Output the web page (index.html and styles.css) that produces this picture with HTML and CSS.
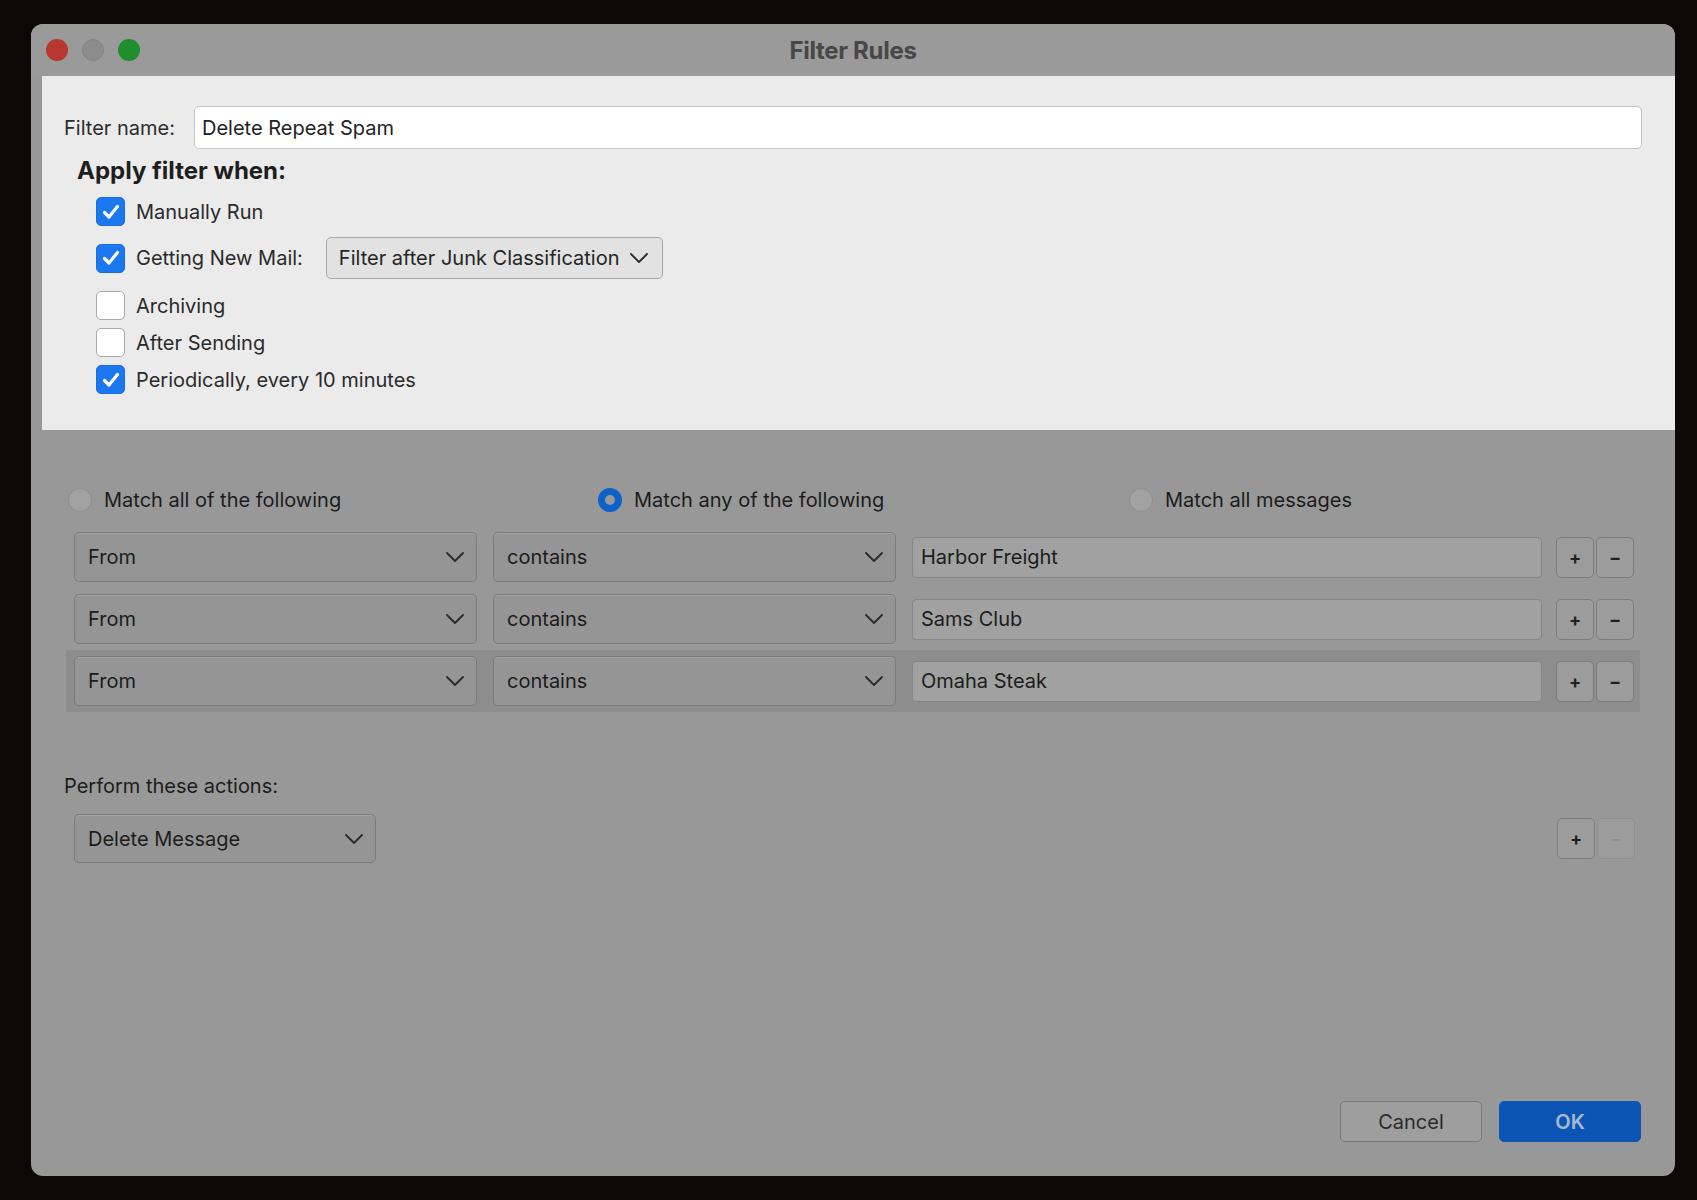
FILE: index.html
```html
<!DOCTYPE html>
<html lang="en">

<head>
  <meta charset="UTF-8">
  <meta name="viewport" content="width=device-width, initial-scale=1.0">
  <title>Filter Rules</title>
  <link rel="stylesheet" href="styles.css">
</head>

<body>
  <div class="window">
    <div class="titlebar">
      <div class="lights">
        <span class="light close"></span>
        <span class="light minimize"></span>
        <span class="light zoom"></span>
      </div>
      <div class="title">Filter Rules</div>
      <div></div>
    </div>

    <!-- Filter name + triggers -->
    <div class="top-panel">
      <div class="name-row">
        <label class="name-label" for="filter-name">Filter name:</label>
        <div class="name-input" id="filter-name">Delete Repeat Spam</div>
      </div>

      <h2 class="apply-title">Apply filter when:</h2>

      <div class="checks">
        <div class="check-row">
          <span class="box on"><svg width="20" height="20" viewBox="0 0 20 20"><path d="M3.5 10.5 L8 15 L16.5 4.5" /></svg></span>
          Manually Run
        </div>
        <div class="check-row tall">
          <span class="box on"><svg width="20" height="20" viewBox="0 0 20 20"><path d="M3.5 10.5 L8 15 L16.5 4.5" /></svg></span>
          Getting New Mail:
          <div class="dropdown">
            Filter after Junk Classification
            <svg class="chev" width="18" height="10" viewBox="0 0 18 10"><path d="M1 1 L9 9 L17 1" /></svg>
          </div>
        </div>
        <div class="check-row spaced">
          <span class="box"></span>
          Archiving
        </div>
        <div class="check-row">
          <span class="box"></span>
          After Sending
        </div>
        <div class="check-row">
          <span class="box on"><svg width="20" height="20" viewBox="0 0 20 20"><path d="M3.5 10.5 L8 15 L16.5 4.5" /></svg></span>
          Periodically, every 10 minutes
        </div>
      </div>
    </div>

    <!-- Match rules + actions -->
    <div class="bottom">
      <div class="match-row">
        <div class="radio-item"><span class="radio"></span>Match all of the following</div>
        <div class="radio-item"><span class="radio on"></span>Match any of the following</div>
        <div class="radio-item"><span class="radio"></span>Match all messages</div>
      </div>

      <div class="rules">
        <div class="rule">
          <div class="select wide">From<svg class="chev" width="18" height="10" viewBox="0 0 18 10"><path d="M1 1 L9 9 L17 1" /></svg></div>
          <div class="select wide">contains<svg class="chev" width="18" height="10" viewBox="0 0 18 10"><path d="M1 1 L9 9 L17 1" /></svg></div>
          <div class="value">Harbor Freight</div>
          <div class="pm">
            <span class="pm-btn">+</span>
            <span class="pm-btn">&minus;</span>
          </div>
        </div>
        <div class="rule">
          <div class="select wide">From<svg class="chev" width="18" height="10" viewBox="0 0 18 10"><path d="M1 1 L9 9 L17 1" /></svg></div>
          <div class="select wide">contains<svg class="chev" width="18" height="10" viewBox="0 0 18 10"><path d="M1 1 L9 9 L17 1" /></svg></div>
          <div class="value">Sams Club</div>
          <div class="pm">
            <span class="pm-btn">+</span>
            <span class="pm-btn">&minus;</span>
          </div>
        </div>
        <div class="rule selected">
          <div class="select wide">From<svg class="chev" width="18" height="10" viewBox="0 0 18 10"><path d="M1 1 L9 9 L17 1" /></svg></div>
          <div class="select wide">contains<svg class="chev" width="18" height="10" viewBox="0 0 18 10"><path d="M1 1 L9 9 L17 1" /></svg></div>
          <div class="value">Omaha Steak</div>
          <div class="pm">
            <span class="pm-btn">+</span>
            <span class="pm-btn">&minus;</span>
          </div>
        </div>
      </div>

      <div class="actions-label">Perform these actions:</div>
      <div class="action-row">
        <div class="select action">Delete Message<svg class="chev" width="18" height="10" viewBox="0 0 18 10"><path d="M1 1 L9 9 L17 1" /></svg></div>
        <div class="pm">
          <span class="pm-btn">+</span>
          <span class="pm-btn disabled">&minus;</span>
        </div>
      </div>

      <div class="footer">
        <button class="btn">Cancel</button>
        <button class="btn primary">OK</button>
      </div>
    </div>
  </div>
</body>

</html>
```

FILE: styles.css
```css
/* Global */
* {
  box-sizing: border-box;
}

body {
  margin: 0;
  height: 1200px;
  padding: 24px 0 0 31px;
  background: #0b0807;
  font-family: 'Inter', 'Roboto', sans-serif;
  font-size: 20px;
  color: #222;
  overflow: hidden;
}

.window {
  width: 1644px;
  height: 1152px;
  border-radius: 12px;
  overflow: hidden;
  background: #989898;
  display: flex;
  flex-direction: column;
}

/* Title bar */
.titlebar {
  height: 52px;
  flex: none;
  display: grid;
  grid-template-columns: 1fr auto 1fr;
  align-items: center;
  background: #9a9a9a;
}

.lights {
  display: flex;
  gap: 14px;
  padding-left: 15px;
}

.light {
  width: 22px;
  height: 22px;
  border-radius: 50%;
}

.light.close {
  background: #b8382f;
}

.light.minimize {
  background: #8c8c8c;
  border: 1px solid #838383;
}

.light.zoom {
  background: #1f8e2c;
}

.title {
  font-weight: 700;
  font-size: 24px;
  color: #474747;
  letter-spacing: -0.3px;
}

/* Top panel */
.top-panel {
  flex: none;
  height: 354px;
  margin-left: 11px;
  background: #ebebeb;
  padding: 30px 33px 0 22px;
}

.name-row {
  display: flex;
  align-items: center;
}

.name-label {
  flex: 0 0 130px;
  color: #2c2c2c;
}

.name-input {
  flex: 1;
  height: 43px;
  background: #fff;
  border: 1px solid #c4c4c4;
  border-radius: 5px;
  padding-left: 7px;
  display: flex;
  align-items: center;
}

.apply-title {
  margin: 9px 0 0 13px;
  font-size: 24px;
  line-height: 26px;
  font-weight: 700;
  color: #1e1e1e;
}

.checks {
  margin: 9px 0 0 32px;
}

.check-row {
  height: 37px;
  display: flex;
  align-items: center;
  gap: 11px;
  color: #2a2a2a;
}

.check-row.tall {
  height: 42px;
  margin-top: 7px;
}

.check-row.spaced {
  margin-top: 8px;
}

.box {
  width: 29px;
  height: 29px;
  border-radius: 5px;
  background: #fff;
  border: 1px solid #a9a9a9;
  display: flex;
  align-items: center;
  justify-content: center;
}

.box.on {
  background: #1c78f0;
  border-color: #1a6fdc;
}

.box svg path {
  fill: none;
  stroke: #fff;
  stroke-width: 3.2;
  stroke-linecap: round;
  stroke-linejoin: round;
}

.dropdown {
  margin-left: 12px;
  width: 337px;
  height: 42px;
  border: 1px solid #a8a8a8;
  border-radius: 5px;
  background: #e2e2e2;
  display: flex;
  align-items: center;
  padding-left: 12px;
  gap: 10px;
  color: #252525;
}

.chev path {
  fill: none;
  stroke: #2a2a2a;
  stroke-width: 1.8;
  stroke-linecap: round;
  stroke-linejoin: round;
}

/* Lower (dimmed) area */
.bottom {
  flex: 1;
  display: flex;
  flex-direction: column;
  padding-top: 58px;
  color: #1c1c1c;
}

.match-row {
  display: grid;
  grid-template-columns: 530px 531px 1fr;
  margin-left: 37px;
  height: 24px;
}

.radio-item {
  display: flex;
  align-items: center;
  gap: 12px;
}

.radio {
  width: 24px;
  height: 24px;
  border-radius: 50%;
  background: #a2a2a2;
  border: 1px solid #8d8d8d;
}

.radio.on {
  background: #9a9a9a;
  border: 7px solid #0c62c9;
}

.rules {
  margin: 14px 0 0 35px;
  width: 1574px;
}

.rule {
  height: 62px;
  display: flex;
  align-items: center;
  padding: 0 5px 0 8px;
}

.rule.selected {
  background: #8d8d8d;
}

.select {
  height: 50px;
  border: 1px solid #7a7a7a;
  border-radius: 5px;
  background: #959595;
  box-shadow: inset 0 1px 0 #a3a3a3;
  display: flex;
  align-items: center;
  justify-content: space-between;
  padding: 0 12px 0 13px;
}

.select.wide {
  width: 403px;
  margin-right: 16px;
}

.value {
  width: 630px;
  height: 41px;
  border: 1px solid #858585;
  border-radius: 4px;
  background: #a1a1a1;
  display: flex;
  align-items: center;
  padding-left: 8px;
  margin-right: 14px;
}

.pm {
  display: flex;
  gap: 2px;
}

.pm-btn {
  width: 38px;
  height: 41px;
  border: 1px solid #7c7c7c;
  border-radius: 5px;
  background: #9c9c9c;
  display: flex;
  align-items: center;
  justify-content: center;
  font-size: 18px;
  font-weight: 700;
  color: #1f1f1f;
}

.pm-btn.disabled {
  border-color: #8f8f8f;
  color: #8a8a8a;
  font-weight: 400;
}

.actions-label {
  margin: 62px 0 0 33px;
  line-height: 24px;
}

.action-row {
  margin: 16px 40px 0 43px;
  display: flex;
  align-items: center;
  justify-content: space-between;
}

.select.action {
  width: 302px;
  height: 49px;
}

/* Dialog buttons */
.footer {
  margin-top: auto;
  padding: 0 34px 34px 0;
  display: flex;
  justify-content: flex-end;
  gap: 17px;
}

.btn {
  width: 142px;
  height: 41px;
  border-radius: 5px;
  font-family: inherit;
  font-size: 20px;
  border: 1px solid #777;
  background: #9e9e9e;
  color: #2b2b2b;
}

.btn.primary {
  background: #0c55b4;
  border-color: #0c55b4;
  color: #aab9cf;
  font-weight: 600;
}
```
